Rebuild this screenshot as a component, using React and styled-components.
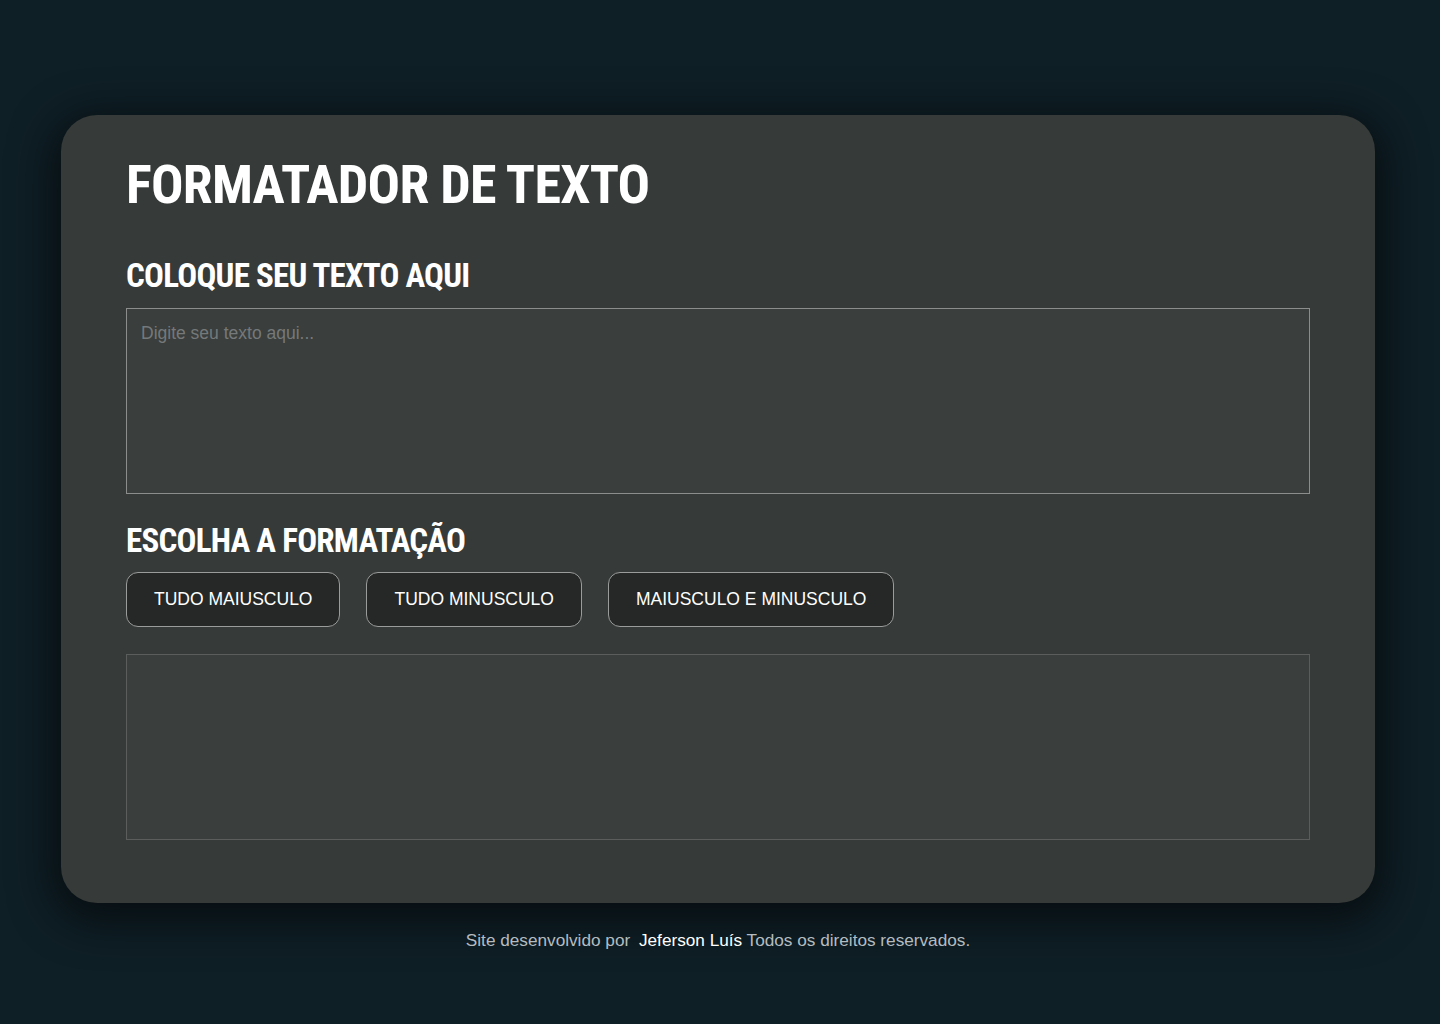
import { useState } from "react";
import styled, { createGlobalStyle } from "styled-components";

const GlobalStyle = createGlobalStyle`
    * {
        box-sizing: border-box;
    }
    body {
        margin: 0;
        background-color: #0f1f26;
        font-family: "Liberation Sans", Arial, sans-serif;
    }
`

const App = () => {
    const [text, setText] = useState("");
    const [result, setResult] = useState("");

    // formatações
    const toUpper = () => setResult(text.toUpperCase());
    const toLower = () => setResult(text.toLowerCase());
    const toMixed = () =>
        setResult(
            text
                .split("")
                .map((c, i) => (i % 2 === 0 ? c.toUpperCase() : c.toLowerCase()))
                .join("")
        );

    return (
        <>
            <GlobalStyle />
            <Page>
                <Card>
                    <Title>FORMATADOR DE TEXTO</Title>
                    <Heading $top={47}>COLOQUE SEU TEXTO AQUI</Heading>
                    <Input
                        placeholder="Digite seu texto aqui..."
                        value={text}
                        onChange={(e) => setText(e.target.value)}
                    />
                    <Heading $top={30}>ESCOLHA A FORMATAÇÃO</Heading>
                    <ButtonRow>
                        <FormatButton onClick={toUpper}>TUDO MAIUSCULO</FormatButton>
                        <FormatButton onClick={toLower}>TUDO MINUSCULO</FormatButton>
                        <FormatButton onClick={toMixed}>MAIUSCULO E MINUSCULO</FormatButton>
                    </ButtonRow>
                    <Output>{result}</Output>
                </Card>
                <Footer>
                    Site desenvolvido por <Author>Jeferson Luís</Author> Todos os direitos reservados.
                </Footer>
            </Page>
        </>
    );
};

export default App;

const Page = styled.div`
    min-height: 100vh;
    display: flex;
    flex-direction: column;
    align-items: center;
    padding: 115px 4px 0 0;
`
const Card = styled.div`
    width: 1314px;
    display: flex;
    flex-direction: column;
    padding: 43px 65px 63px 65px;
    background-color: #363a38;
    border-radius: 36px;
    box-shadow: 0 10px 40px 10px rgba(5, 10, 12, 0.75);
`
const Title = styled.h1`
    margin: 0;
    font-family: "Roboto Condensed", "Roboto", sans-serif;
    font-stretch: condensed;
    font-weight: 700;
    font-size: 54px;
    line-height: 1;
    letter-spacing: -0.75px;
    color: #ffffff;
`
const Heading = styled.h2`
    margin: ${(p) => p.$top}px 0 0 0;
    font-family: "Roboto Condensed", "Roboto", sans-serif;
    font-stretch: condensed;
    font-weight: 700;
    font-size: 33px;
    line-height: 1;
    letter-spacing: -0.75px;
    color: #ffffff;
`
const Input = styled.textarea`
    margin-top: 16px;
    height: 186px;
    padding: 14px 14px;
    resize: none;
    background-color: #3a3e3c;
    border: 1px solid #8a8d8c;
    color: #e6e6e6;
    font-family: "Liberation Sans", Arial, sans-serif;
    font-size: 17.5px;
    outline: none;
    &::placeholder {
        color: #75797a;
    }
`
const ButtonRow = styled.div`
    margin-top: 15px;
    display: flex;
    gap: 26px;
`
const FormatButton = styled.button`
    height: 55px;
    padding: 0 27px;
    background-color: #252827;
    border: 1px solid #9a9c9b;
    border-radius: 12px;
    color: #ffffff;
    font-family: "Liberation Sans", Arial, sans-serif;
    font-size: 17.5px;
    cursor: pointer;
`
const Output = styled.div`
    margin-top: 27px;
    height: 186px;
    padding: 14px;
    background-color: #3a3e3c;
    border: 1px solid #5a5d5c;
    color: #e6e6e6;
    font-size: 17.5px;
    white-space: pre-wrap;
`
const Footer = styled.p`
    margin: 27px 0 0 0;
    font-size: 17.2px;
    color: #b4bcc0;
`
const Author = styled.span`
    margin-left: 4px;
    color: #ffffff;
`
